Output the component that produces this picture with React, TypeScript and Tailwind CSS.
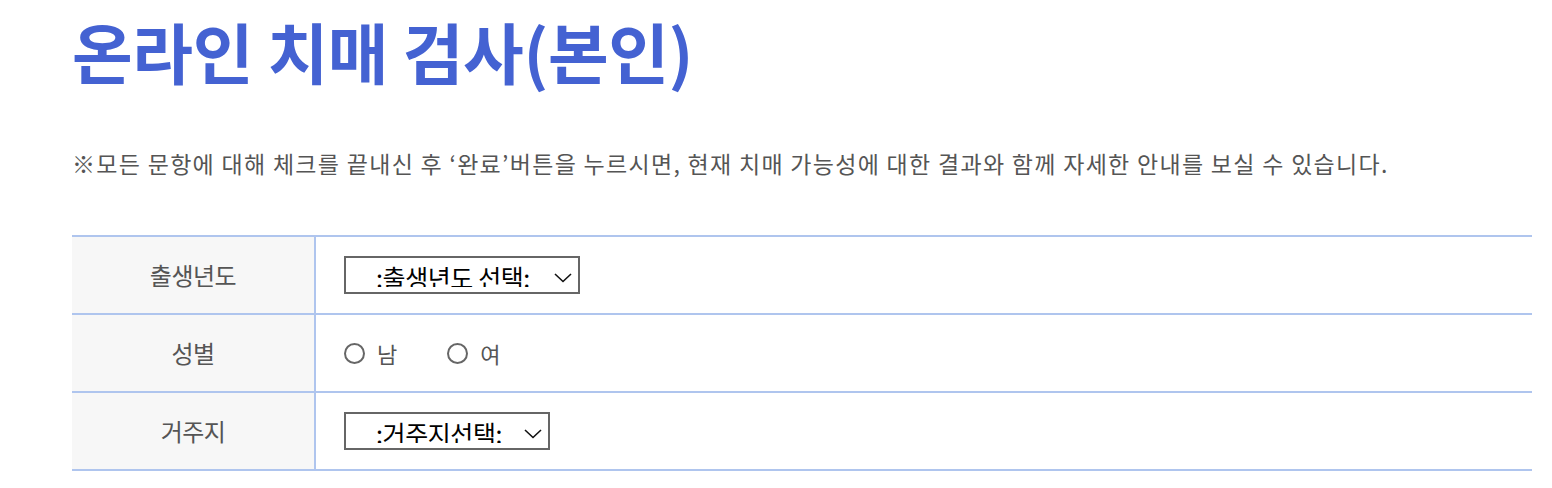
import type { ReactNode } from 'react';

const font = { fontFamily: '"Noto Sans CJK KR", "Noto Sans", sans-serif' };

const Chevron = () => (
  <svg
    className="absolute right-[6px] top-[15px]"
    width="18"
    height="10"
    viewBox="0 0 18 10"
    fill="none"
    stroke="#111"
    strokeWidth="1.6"
  >
    <polyline points="1,1 9,8.5 17,1" />
  </svg>
);

const FakeSelect = ({ label, width }: { label: string; width: string }) => (
  <div className={`relative h-[38px] ${width} border-2 border-[#666] bg-white`}>
    <div className="h-[29px] overflow-hidden pl-[30px]">
      <span className="block pt-[3px] text-[25px] leading-[32px] tracking-[-0.4px] text-black">{label}</span>
    </div>
    <Chevron />
  </div>
);

const Radio = ({ label }: { label: string }) => (
  <label className="flex items-center gap-[12px]">
    <span className="h-[21px] w-[21px] rounded-full border-2 border-[#666] bg-white" />
    <span className="text-[22px] leading-none text-[#555]">{label}</span>
  </label>
);

const Row = ({ title, children }: { title: string; children: ReactNode }) => (
  <div className="grid h-[78px] grid-cols-[244px_1fr] border-b-2 border-[#afc5ee]">
    <div className="flex items-center justify-center border-r-2 border-[#afc5ee] bg-[#f7f7f7] text-[24px] tracking-[-0.5px] text-[#555]">
      {title}
    </div>
    <div className="flex items-center pl-[28px]">{children}</div>
  </div>
);

export default function App() {
  return (
    <div className="min-h-[488px] bg-white pl-[72px] pr-[20px]" style={font}>
      <h1 className="pt-[4px] text-[66px] font-bold leading-[92px] tracking-[-0.4px] text-[#4462d2]">
        온라인 치매 검사(본인)
      </h1>
      <p className="mt-[52px] text-[23px] leading-[30px] tracking-[1.3px] text-[#555]">
        ※모든 문항에 대해 체크를 끝내신 후 ‘완료’버튼을 누르시면, 현재 치매 가능성에 대한 결과와 함께 자세한 안내를 보실 수 있습니다.
      </p>
      <div className="mt-[57px] w-[1460px] border-t-2 border-[#afc5ee]">
        <Row title="출생년도">
          <FakeSelect label=":출생년도 선택:" width="w-[236px]" />
        </Row>
        <Row title="성별">
          <div className="flex items-center gap-[50px]">
            <Radio label="남" />
            <Radio label="여" />
          </div>
        </Row>
        <Row title="거주지">
          <FakeSelect label=":거주지선택:" width="w-[206px]" />
        </Row>
      </div>
    </div>
  );
}
